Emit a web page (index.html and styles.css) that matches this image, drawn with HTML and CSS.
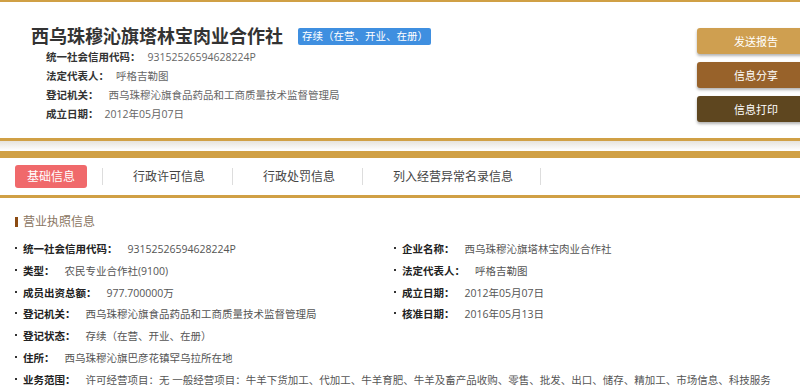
FILE: index.html
```html
<!DOCTYPE html>
<html lang="zh-CN">
<head>
    <meta charset="UTF-8">
    <meta name="viewport" content="width=device-width, initial-scale=1.0">
    <title>西乌珠穆沁旗塔林宝肉业合作社</title>
    <link rel="stylesheet" href="styles.css">
</head>
<body>
    <div class="page">
        <div class="masthead">
            <div class="summary">
                <h1 class="company">西乌珠穆沁旗塔林宝肉业合作社<span class="status">存续（在营、开业、在册）</span></h1>
                <ul class="brief">
                    <li><b>统一社会信用代码：</b><span>93152526594628224P</span></li>
                    <li><b>法定代表人：</b><span>呼格吉勒图</span></li>
                    <li><b>登记机关：</b><span class="wide-gap">西乌珠穆沁旗食品药品和工商质量技术监督管理局</span></li>
                    <li><b>成立日期：</b><span class="narrow-gap">2012年05月07日</span></li>
                </ul>
            </div>
            <div class="actions">
                <button class="btn btn-report">发送报告</button>
                <button class="btn btn-share">信息分享</button>
                <button class="btn btn-print">信息打印</button>
            </div>
        </div>

        <div class="divider"></div>

        <ul class="tabs">
            <li class="tab active"><span>基础信息</span></li>
            <li class="tab">行政许可信息</li>
            <li class="tab">行政处罚信息</li>
            <li class="tab">列入经营异常名录信息</li>
        </ul>

        <div class="section">
            <h2 class="section-title">营业执照信息</h2>
            <ul class="facts">
                <li><b>统一社会信用代码：</b><span>93152526594628224P</span></li>
                <li><b>企业名称：</b><span>西乌珠穆沁旗塔林宝肉业合作社</span></li>
                <li><b>类型：</b><span>农民专业合作社(9100)</span></li>
                <li><b>法定代表人：</b><span>呼格吉勒图</span></li>
                <li><b>成员出资总额：</b><span>977.700000万</span></li>
                <li><b>成立日期：</b><span>2012年05月07日</span></li>
                <li><b>登记机关：</b><span>西乌珠穆沁旗食品药品和工商质量技术监督管理局</span></li>
                <li><b>核准日期：</b><span>2016年05月13日</span></li>
                <li class="full"><b>登记状态：</b><span>存续（在营、开业、在册）</span></li>
                <li class="full"><b>住所：</b><span>西乌珠穆沁旗巴彦花镇罕乌拉所在地</span></li>
                <li class="full"><b>业务范围：</b><span>许可经营项目：无 一般经营项目：牛羊下货加工、代加工、牛羊育肥、牛羊及畜产品收购、零售、批发、出口、储存、精加工、市场信息、科技服务</span></li>
            </ul>
        </div>
    </div>
</body>
</html>
```

FILE: styles.css
```css
body {
    margin: 0;
    overflow: hidden;
    background-color: #fff;
    font-family: "Open Sans", "Noto Sans CJK SC", sans-serif;
    color: #333;
}

ul {
    list-style: none;
    margin: 0;
    padding: 0;
}

.page {
    width: 815px;
}

/* header */

.masthead {
    display: flex;
    justify-content: space-between;
    height: 136px;
    border-top: 2px solid #d0a045;
    border-bottom: 3px solid #d0a045;
}

.summary {
    padding: 24px 0 0 31px;
}

.company {
    display: flex;
    align-items: center;
    margin: 0;
    font-size: 18px;
    line-height: 20px;
    font-weight: bold;
    color: #333;
}

.status {
    margin-left: 15px;
    padding: 0 3px 0 4px;
    height: 17px;
    line-height: 17px;
    font-size: 10.5px;
    font-weight: normal;
    color: #fff;
    background-color: #3f8fe0;
    border-radius: 2px;
}

.brief {
    margin-top: 2px;
    padding-left: 15px;
    font-size: 10.5px;
    line-height: 19px;
    white-space: nowrap;
}

.brief b {
    color: #333;
}

.brief span {
    margin-left: 7px;
    color: #666;
}

.brief .wide-gap {
    margin-left: 10px;
}

.brief .narrow-gap {
    margin-left: 6px;
}

.actions {
    display: flex;
    flex-direction: column;
    gap: 8px;
    margin-top: 26px;
}

.btn {
    width: 118px;
    height: 26px;
    border: none;
    border-radius: 3px;
    font-family: inherit;
    font-size: 11px;
    color: #fff;
    box-shadow: 0 2px 3px rgba(0, 0, 0, 0.3);
    cursor: pointer;
}

.btn-report {
    background-color: #cf9f50;
}

.btn-share {
    background-color: #98622a;
}

.btn-print {
    background-color: #5e461f;
}

.divider {
    height: 10px;
    background: linear-gradient(#e6e3dc, #fff);
    border-bottom: 7px solid #d0a045;
}

/* tabs */

.tabs {
    display: flex;
    align-items: center;
    padding: 10px 0;
    border-bottom: 3px solid #d0a045;
}

.tab {
    padding: 0 27px 0 30px;
    border-right: 1px solid #ddd;
    font-size: 12px;
    line-height: 17px;
    color: #444;
}

.tab.active {
    padding: 0 15px;
}

.tab.active span {
    display: block;
    margin: -3px 0;
    padding: 3px 12px;
    background-color: #f0696b;
    color: #fff;
    border-radius: 3px;
}

/* business licence */

.section {
    padding-top: 16px;
}

.section-title {
    display: flex;
    align-items: center;
    margin: 0 0 0 15px;
    font-size: 12px;
    line-height: 16px;
    font-weight: normal;
    color: #8a7562;
}

.section-title::before {
    content: "";
    width: 3px;
    height: 10px;
    margin-right: 5px;
    background-color: #8c4b12;
}

.facts {
    display: grid;
    grid-template-columns: 379px 1fr;
    margin-top: 9px;
    font-size: 10.5px;
    line-height: 21.8px;
    white-space: nowrap;
}

.facts li {
    padding-left: 15px;
}

.facts li::before {
    content: "";
    display: inline-block;
    width: 2px;
    height: 2px;
    margin-right: 6px;
    vertical-align: 4px;
    background-color: #333;
}

.facts .full {
    grid-column: span 2;
}

.facts b {
    color: #222;
}

.facts span {
    margin-left: 10px;
    color: #555;
}
```
